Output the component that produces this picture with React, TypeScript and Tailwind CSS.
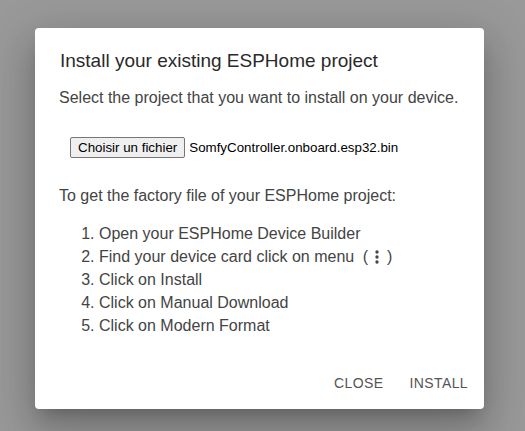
import React from 'react'

const STEPS = [
  'Open your ESPHome Device Builder',
  'Find your device card click on menu',
  'Click on Install',
  'Click on Manual Download',
  'Click on Modern Format',
]

function DotsVertical() {
  return (
    <svg width="20" height="20" viewBox="0 0 24 24" className="ml-[-1px] inline-block align-[-5px]" fill="currentColor">
      <path d="M12,16A2,2 0 0,1 14,18A2,2 0 0,1 12,20A2,2 0 0,1 10,18A2,2 0 0,1 12,16M12,10A2,2 0 0,1 14,12A2,2 0 0,1 12,14A2,2 0 0,1 10,12A2,2 0 0,1 12,10M12,4A2,2 0 0,1 14,6A2,2 0 0,1 12,8A2,2 0 0,1 10,6A2,2 0 0,1 12,4Z" />
    </svg>
  )
}

export default function App() {
  return (
    <div className="h-[431px] w-[525px] bg-[#999999] pl-[35px] pt-[28px] font-['Liberation_Sans',Arial,sans-serif]">
      <div className="flex w-[449px] flex-col rounded-[4px] bg-white shadow-[0_11px_15px_-7px_rgba(0,0,0,0.2),0_24px_38px_3px_rgba(0,0,0,0.14),0_9px_46px_8px_rgba(0,0,0,0.12)]">
        {/* Title */}
        <h2 className="pl-[25px] pr-6 pt-[19px] text-[19px] leading-[28px] text-[#2a2a2a]">
          Install your existing ESPHome project
        </h2>

        {/* Content */}
        <div className="px-6 pb-5 text-[16px] text-[#444444]">
          <p className="mt-[11px] leading-6">Select the project that you want to install on your device.</p>

          <div className="mt-[27px] flex items-center pl-[11px] text-[13.33px] text-black">
            <span className="rounded-[2px] border border-[#767676] bg-[#efefef] px-[7px] leading-[19px]">
              Choisir un fichier
            </span>
            <span className="ml-[4px]">SomfyController.onboard.esp32.bin</span>
          </div>

          <p className="mt-[26px] leading-6">To get the factory file of your ESPHome project:</p>

          <ol className="mt-[14px] list-decimal pl-10 leading-[23px]">
            {STEPS.map((step, i) => (
              <li key={step}>
                {step}
                {i === 1 && (
                  <>
                    {' '}
                    <span className="ml-[4px]">(</span>
                    <DotsVertical />
                    {')'}
                  </>
                )}
              </li>
            ))}
          </ol>
        </div>

        {/* Actions */}
        <div className="flex justify-end gap-[10px] p-2">
          <button className="h-9 px-2 text-[14px] tracking-[0.4px] text-[#555555] uppercase">Close</button>
          <button className="h-9 px-2 text-[14px] tracking-[0.4px] text-[#555555] uppercase">Install</button>
        </div>
      </div>
    </div>
  )
}
